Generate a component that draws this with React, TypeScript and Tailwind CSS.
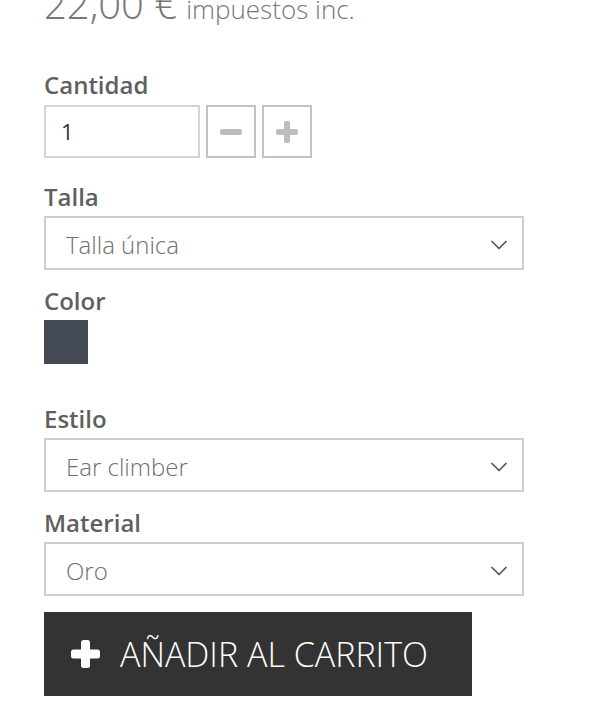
import { ChevronDown } from 'lucide-react'

const font = { fontFamily: '"Open Sans", "Noto Sans", sans-serif' }

function Label({ children, className = '' }: { children: React.ReactNode; className?: string }) {
  return (
    <div className={`text-[24px] leading-[30px] font-semibold text-[#5f5f5f] ${className}`}>
      {children}
    </div>
  )
}

function Select({ value }: { value: string }) {
  return (
    <div className="mt-[4px] flex h-[54px] w-[480px] items-center justify-between border-2 border-[#cfcfcf] pl-[20px] pr-[9px]">
      <span className="pt-[3px] text-[24px] font-light text-[#6f6f6f]">{value}</span>
      <ChevronDown className="mt-[3px] h-[28px] w-[28px] text-[#555]" strokeWidth={1.5} />
    </div>
  )
}

export default function App() {
  return (
    <div className="min-h-screen bg-white px-[44px]" style={font}>
      <div className="mt-[-16px] flex items-baseline gap-[9px] leading-none text-[#777]">
        <span className="text-[40px] font-light">22,00 €</span>
        <span className="text-[26px] font-light">impuestos inc.</span>
      </div>

      <Label className="mt-[46px]">Cantidad</Label>
      <div className="mt-[5px] flex gap-[6px]">
        <div className="flex h-[53px] w-[156px] items-center border-2 border-[#d4d4d4] pl-[15px] text-[22px] text-[#333]">
          1
        </div>
        <button className="flex h-[53px] w-[50px] items-center justify-center border-2 border-[#bfc3c7] bg-white">
          <span className="block h-[6px] w-[22px] rounded-[2px] bg-[#bdbdbd]" />
        </button>
        <button className="relative flex h-[53px] w-[50px] items-center justify-center border-2 border-[#bfc3c7] bg-white">
          <span className="absolute h-[6px] w-[22px] rounded-[2px] bg-[#bdbdbd]" />
          <span className="absolute h-[22px] w-[6px] rounded-[2px] bg-[#bdbdbd]" />
        </button>
      </div>

      <Label className="mt-[24px]">Talla</Label>
      <Select value="Talla única" />

      <Label className="mt-[16px]">Color</Label>
      <div className="mt-[4px] h-[44px] w-[44px] bg-[#434a54]" />

      <Label className="mt-[40px]">Estilo</Label>
      <Select value="Ear climber" />

      <Label className="mt-[16px]">Material</Label>
      <Select value="Oro" />

      <button className="mt-[16px] flex h-[84px] w-[428px] items-center bg-[#333333] pl-[27px] text-white">
        <svg width="29" height="28" viewBox="0 0 29 28" className="shrink-0">
          <rect x="10" y="0" width="9" height="28" rx="2.5" fill="white" />
          <rect x="0" y="9.5" width="29" height="9" rx="2.5" fill="white" />
        </svg>
        <span className="ml-[20px] text-[34px] font-light">AÑADIR AL CARRITO</span>
      </button>
    </div>
  )
}
